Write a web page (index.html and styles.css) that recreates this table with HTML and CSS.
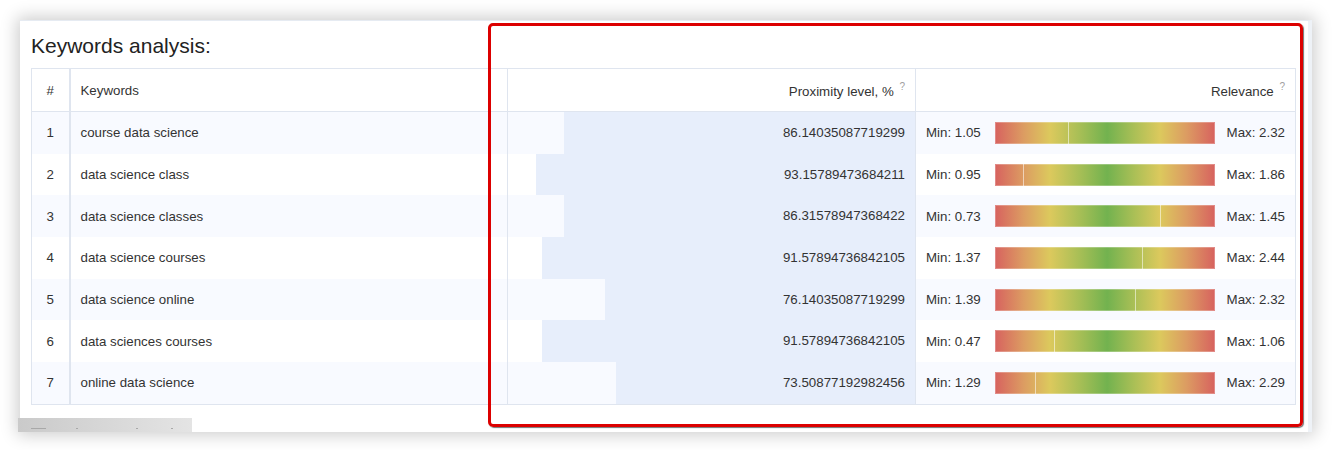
FILE: index.html
```html
<!DOCTYPE html>
<html lang="en">
<head>
    <meta charset="UTF-8">
    <title>Keywords analysis</title>
    <link rel="stylesheet" href="styles.css">
</head>
<body>

<div class="page">
    <div class="panel">
        <h2 class="title">Keywords analysis:</h2>

        <table class="kw-table">
            <colgroup>
                <col style="width:38px">
                <col style="width:438px">
                <col style="width:408px">
                <col style="width:380px">
            </colgroup>
            <thead>
                <tr>
                    <th class="num">#</th>
                    <th>Keywords</th>
                    <th class="right">Proximity level, % <sup>?</sup></th>
                    <th class="right">Relevance <sup>?</sup></th>
                </tr>
            </thead>
            <tbody>
                <tr>
                    <td class="num">1</td>
                    <td>course data science</td>
                    <td class="prox"><div class="prox-bar" style="width:86.14%">86.14035087719299</div></td>
                    <td class="rel"><div class="rel-row"><span>Min: 1.05</span><div class="scale"><i style="left:33%"></i></div><span class="max">Max: 2.32</span></div></td>
                </tr>
                <tr>
                    <td class="num">2</td>
                    <td>data science class</td>
                    <td class="prox"><div class="prox-bar" style="width:93.16%">93.15789473684211</div></td>
                    <td class="rel"><div class="rel-row"><span>Min: 0.95</span><div class="scale"><i style="left:12.5%"></i></div><span class="max">Max: 1.86</span></div></td>
                </tr>
                <tr>
                    <td class="num">3</td>
                    <td>data science classes</td>
                    <td class="prox"><div class="prox-bar" style="width:86.32%">86.31578947368422</div></td>
                    <td class="rel"><div class="rel-row"><span>Min: 0.73</span><div class="scale"><i style="left:75%"></i></div><span class="max">Max: 1.45</span></div></td>
                </tr>
                <tr>
                    <td class="num">4</td>
                    <td>data science courses</td>
                    <td class="prox"><div class="prox-bar" style="width:91.58%">91.57894736842105</div></td>
                    <td class="rel"><div class="rel-row"><span>Min: 1.37</span><div class="scale"><i style="left:66.8%"></i></div><span class="max">Max: 2.44</span></div></td>
                </tr>
                <tr>
                    <td class="num">5</td>
                    <td>data science online</td>
                    <td class="prox"><div class="prox-bar" style="width:76.14%">76.14035087719299</div></td>
                    <td class="rel"><div class="rel-row"><span>Min: 1.39</span><div class="scale"><i style="left:63.6%"></i></div><span class="max">Max: 2.32</span></div></td>
                </tr>
                <tr>
                    <td class="num">6</td>
                    <td>data sciences courses</td>
                    <td class="prox"><div class="prox-bar" style="width:91.58%">91.57894736842105</div></td>
                    <td class="rel"><div class="rel-row"><span>Min: 0.47</span><div class="scale"><i style="left:27%"></i></div><span class="max">Max: 1.06</span></div></td>
                </tr>
                <tr>
                    <td class="num">7</td>
                    <td>online data science</td>
                    <td class="prox"><div class="prox-bar" style="width:73.51%">73.50877192982456</div></td>
                    <td class="rel"><div class="rel-row"><span>Min: 1.29</span><div class="scale"><i style="left:18.2%"></i></div><span class="max">Max: 2.29</span></div></td>
                </tr>
            </tbody>
        </table>

        <div class="scrollbar"><b></b><b></b><b></b><b></b></div>
    </div>

    <div class="highlight"></div>
</div>

</body>
</html>
```

FILE: styles.css
```css
body {
    margin: 0;
    background: #ffffff;
    font-family: "Liberation Sans", Arial, sans-serif;
    color: #333;
}
.page {
    position: relative;
    width: 1332px;
    height: 450px;
    padding: 20px 20px 0 20px;
    box-sizing: border-box;
    overflow: hidden;
}
.panel {
    position: relative;
    width: 1292px;
    height: 412px;
    box-sizing: border-box;
    padding: 13px 17px 0 11px;
    background: #fff;
    border-top: 1px solid #e6ebf2;
    border-right: 4px solid #eef2f7;
    box-shadow: 0 0 16px 3px rgba(0, 0, 0, 0.2);
}
.title {
    margin: 0 0 10px 0;
    font-size: 21px;
    line-height: 24px;
    font-weight: normal;
    color: #222;
}
.kw-table {
    width: 1264px;
    table-layout: fixed;
    border-collapse: collapse;
    font-size: 13.3px;
    border: 1px solid #dfe5ef;
}
.kw-table th,
.kw-table td {
    border: 1px solid #dfe5ef;
    padding: 0 10px;
    text-align: left;
    font-weight: normal;
    white-space: nowrap;
}
.kw-table th {
    height: 42px;
    background: #fff;
}
.kw-table td {
    height: 41.7px;
    border-top: none;
    border-bottom: none;
}
.kw-table tbody tr:nth-child(odd) td {
    background: #f8faff;
}
.kw-table .num {
    text-align: center;
    padding: 0;
    border-right: 2px solid #dfe5ef;
}
.kw-table .right {
    text-align: right;
}
sup {
    font-size: 10px;
    color: #a0a0a0;
    vertical-align: 6px;
    margin-left: 2px;
}
.kw-table td.prox {
    padding: 0;
}
.prox-bar {
    margin-left: auto;
    height: 41.7px;
    line-height: 41.7px;
    padding-right: 10px;
    box-sizing: border-box;
    background: #e7eefb;
    text-align: right;
}
.rel-row {
    display: grid;
    grid-template-columns: 69px 220px 1fr;
    align-items: center;
}
.max {
    text-align: right;
}
.scale {
    position: relative;
    height: 22px;
    background: linear-gradient(to right, #d7625f 0%, #dc9c62 13%, #dcc95d 25%, #a9bf56 38%, #72b24f 51%, #a9bf56 63%, #dcc95d 75%, #dc9c62 87%, #d7625f 100%);
    box-shadow: inset 0 0 0 1px rgba(255, 255, 255, 0.25);
}
.scale i {
    position: absolute;
    top: 0;
    bottom: 0;
    width: 1px;
    background: rgba(255, 255, 255, 0.55);
}
.scrollbar {
    position: absolute;
    left: -2px;
    bottom: 0;
    width: 174px;
    height: 14px;
    background: linear-gradient(to right, #cacaca, #e4e4e4);
}
.scrollbar b {
    position: absolute;
    top: 10px;
    height: 1px;
    width: 2px;
    background: #a8a8a8;
}
.scrollbar b:nth-child(1) { left: 13px; width: 15px; }
.scrollbar b:nth-child(2) { left: 58px; }
.scrollbar b:nth-child(3) { left: 118px; }
.scrollbar b:nth-child(4) { left: 153px; }
.highlight {
    position: absolute;
    left: 488px;
    top: 23px;
    width: 815px;
    height: 404px;
    box-sizing: border-box;
    border: 3px solid #dc0000;
    border-radius: 5px;
    box-shadow: 1px 1px 1px rgba(0, 0, 0, 0.55);
}
```
